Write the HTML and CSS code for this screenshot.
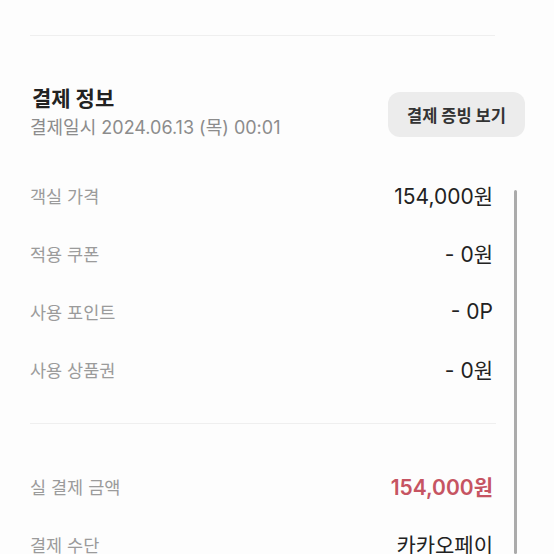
FILE: index.html
```html
<!DOCTYPE html>
<html>
<head>
  <title>결제 정보</title>
  <link rel="stylesheet" href="styles.css">
</head>
<body>
  <div class="top-line"></div>

  <div class="pay-head">
    <div class="pay-title">
      <h2>결제 정보</h2>
      <p class="pay-date">결제일시 2024.06.13 (목) 00:01</p>
    </div>
    <button class="receipt-btn">결제 증빙 보기</button>
  </div>

  <ul class="pay-list">
    <li><span class="label">객실 가격</span><span class="value">154,000원</span></li>
    <li><span class="label">적용 쿠폰</span><span class="value">- 0원</span></li>
    <li><span class="label">사용 포인트</span><span class="value">- 0P</span></li>
    <li><span class="label">사용 상품권</span><span class="value">- 0원</span></li>
  </ul>

  <div class="divider"></div>

  <ul class="pay-list total">
    <li><span class="label">실 결제 금액</span><span class="value price">154,000원</span></li>
    <li><span class="label">결제 수단</span><span class="value">카카오페이</span></li>
  </ul>

  <div class="scroll-thumb"></div>
</body>
</html>
```

FILE: styles.css
```css
:root {
  --text: #222;
  --muted: #9b9b9b;
  --line: #efefef;
  --red: #c65462;
}

body {
  margin: 0;
  padding: 0;
  background: #fdfdfd;
  font-family: Inter, "Noto Sans CJK KR", sans-serif;
  color: var(--text);
  overflow: hidden;
}

.top-line {
  height: 1px;
  margin: 35px 59px 0 30px;
  background: var(--line);
}

.pay-head {
  display: flex;
  justify-content: space-between;
  align-items: flex-start;
  padding: 48px 29px 0 32px;
}

.pay-title h2 {
  margin: 0;
  font-size: 21px;
  line-height: 30px;
  font-weight: 700;
  color: #222;
}

.pay-date {
  margin: 2px 0 0 -2px;
  font-size: 18px;
  line-height: 24px;
  color: #8c8c8c;
}

.receipt-btn {
  margin-top: 8px;
  width: 137px;
  height: 45px;
  padding: 0;
  border: none;
  border-radius: 12px;
  background: #ececec;
  font-family: inherit;
  font-size: 16.5px;
  font-weight: 700;
  color: #333;
}

.pay-list {
  list-style: none;
  margin: 26px 0 0;
  padding: 0 61px 0 30px;
}

.pay-list.total {
  margin-top: 33px;
}

.pay-list li {
  height: 58px;
  display: flex;
  justify-content: space-between;
  align-items: center;
}

.label {
  font-size: 17.5px;
  color: var(--muted);
}

.value {
  font-size: 21px;
  color: var(--text);
}

.value.price {
  color: var(--red);
  font-weight: 600;
}

.divider {
  height: 1px;
  margin: 25px 58px 0 30px;
  background: var(--line);
}

/* scroll indicator */
.scroll-thumb {
  position: fixed;
  top: 190px;
  bottom: 0;
  left: 514px;
  width: 3px;
  border-radius: 2px;
  background: #ababab;
}
```
